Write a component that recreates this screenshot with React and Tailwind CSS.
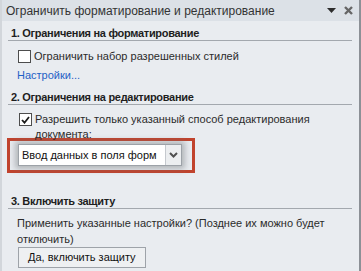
import React from 'react';

const font = { fontFamily: '"Liberation Sans", Arial, sans-serif' };

const Heading = ({ children }) => (
  <div className="ml-[6px] mr-[7px] border-b border-[#a3a8ae] pl-[3px] h-[15px] text-[11px] font-bold leading-[14px] tracking-[-0.3px] text-[#1e1e1e]">
    {children}
  </div>
);

export default function App() {
  return (
    <div
      className="w-[361px] h-[271px] overflow-hidden bg-[#e9ecf0] border-l-2 border-l-[#d2d6db] border-r-2 border-r-[#8c9096] text-[#2b2b2b] text-[11px]"
      style={font}
    >
      <div className="h-[21px] bg-[#dce1e7] flex items-center justify-between pl-[4px] pr-[6px]">
        <span className="text-[12px] text-[#333]">Ограничить форматирование и редактирование</span>
        <div className="flex items-center gap-[8px]">
          <svg width="9" height="5" viewBox="0 0 9 5">
            <path d="M0 0h9L4.5 5z" fill="#2d2d2d" />
          </svg>
          <svg width="9" height="9" viewBox="0 0 9 9">
            <path d="M1 1l7 7M8 1l-7 7" stroke="#666" strokeWidth="2.4" />
          </svg>
        </div>
      </div>

      <div className="pt-[5px]">
        <Heading>1. Ограничения на форматирование</Heading>
        <div className="flex items-center gap-[3px] pl-[16px] mt-[8px] h-[14px]">
          <span className="w-[13px] h-[13px] border border-[#4d4d4d] bg-white" />
          <span className="leading-[14px]">Ограничить набор разрешенных стилей</span>
        </div>
        <div className="pl-[15px] mt-[4px] text-[#1f61c6] leading-[16px]">Настройки...</div>

        <div className="mt-[7px]">
          <Heading>2. Ограничения на редактирование</Heading>
        </div>
        <div className="flex items-start gap-[3px] pl-[17px] mt-[7px]">
          <span className="w-[13px] h-[13px] mt-[1px] border border-[#4d4d4d] bg-white flex items-center justify-center shrink-0">
            <svg width="9" height="8" viewBox="0 0 9 8">
              <path d="M1 4l2.5 2.7L8 1" stroke="#1a1a1a" strokeWidth="1.8" fill="none" />
            </svg>
          </span>
          <span className="leading-[15px]">
            Разрешить только указанный способ редактирования
            <br />
            документа:
          </span>
        </div>
        <div className="ml-[5px] mt-[-4px] w-[188px] border-[3px] border-[#c1432d] pt-[3px] pb-[4px] pl-[8px] pr-[10px]">
          <div className="flex h-[22px] border border-[#9da2a8] bg-white shadow-[0_0_6px_3px_rgba(110,115,120,0.45)]">
            <span className="flex-1 pl-[3px] leading-[20px] whitespace-nowrap text-[#111]">Ввод данных в поля форм</span>
            <span className="w-[16px] border-l border-[#c5c9ce] bg-[#eceef0] flex items-center justify-center">
              <svg width="9" height="6" viewBox="0 0 9 6">
                <path d="M1 1l3.5 3.5L8 1" stroke="#505050" strokeWidth="2" fill="none" />
              </svg>
            </span>
          </div>
        </div>

        <div className="mt-[21px]">
          <Heading>3. Включить защиту</Heading>
        </div>
        <div className="pl-[15px] mt-[6px] leading-[16px]">
          Применить указанные настройки? (Позднее их можно будет
          <br />
          отключить)
        </div>
        <div className="pl-[16px]">
          <button className="h-[21px] px-[9px] border border-[#9ea3a9] bg-[#eef0f2] text-[#111] text-[11px] leading-[19px]">
            Да, включить защиту
          </button>
        </div>
      </div>
    </div>
  );
}
